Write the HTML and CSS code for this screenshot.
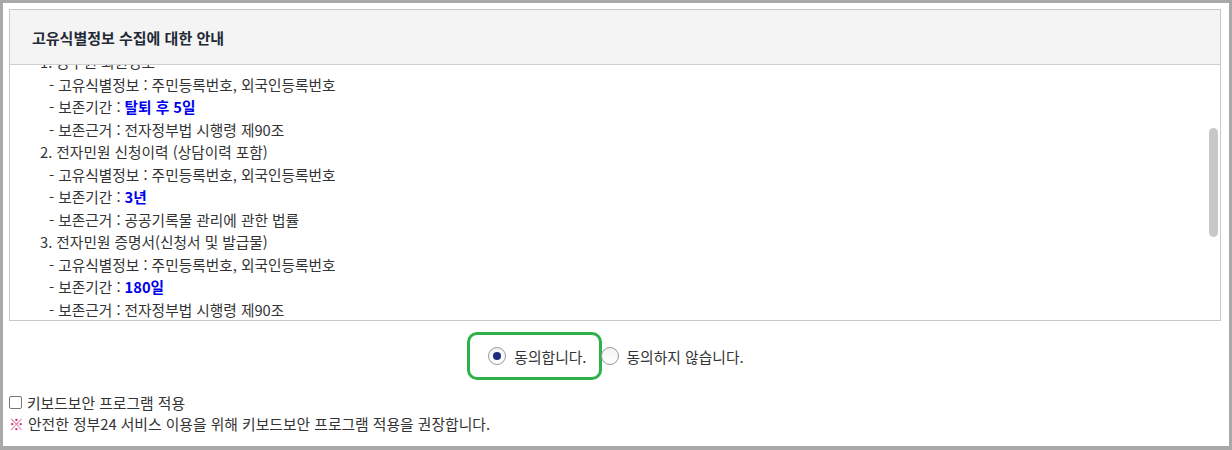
FILE: index.html
```html
<!DOCTYPE html>
<html lang="ko">
<head>
<meta charset="utf-8">
<title>고유식별정보 수집에 대한 안내</title>
<link rel="stylesheet" href="styles.css">
</head>
<body>
<div class="frame">
  <section class="notice">
    <header class="notice-head">고유식별정보 수집에 대한 안내</header>
    <div class="notice-body">
      <div class="notice-scroll">
        <p class="item">1. 공무원 회원정보</p>
        <p class="sub">- 고유식별정보 : 주민등록번호, 외국인등록번호</p>
        <p class="sub">- 보존기간 : <strong class="hl">탈퇴 후 5일</strong></p>
        <p class="sub">- 보존근거 : 전자정부법 시행령 제90조</p>
        <p class="item">2. 전자민원 신청이력 (상담이력 포함)</p>
        <p class="sub">- 고유식별정보 : 주민등록번호, 외국인등록번호</p>
        <p class="sub">- 보존기간 : <strong class="hl">3년</strong></p>
        <p class="sub">- 보존근거 : 공공기록물 관리에 관한 법률</p>
        <p class="item">3. 전자민원 증명서(신청서 및 발급물)</p>
        <p class="sub">- 고유식별정보 : 주민등록번호, 외국인등록번호</p>
        <p class="sub">- 보존기간 : <strong class="hl">180일</strong></p>
        <p class="sub">- 보존근거 : 전자정부법 시행령 제90조</p>
      </div>
      <div class="scroll-thumb"></div>
    </div>
  </section>

  <div class="agree">
    <label class="radio-opt focused"><span class="radio checked"></span><span>동의합니다.</span></label>
    <label class="radio-opt"><span class="radio"></span><span>동의하지 않습니다.</span></label>
  </div>

  <div class="keyboard">
    <label class="check-opt"><span class="checkbox"></span><span>키보드보안 프로그램 적용</span></label>
    <p class="tip"><span class="mark">※</span> 안전한 정부24 서비스 이용을 위해 키보드보안 프로그램 적용을 권장합니다.</p>
  </div>
</div>
</body>
</html>
```

FILE: styles.css
```css
html, body {
  margin: 0;
  padding: 0;
  background: #fff;
}
body {
  font-family: "Noto Sans CJK KR", "Noto Sans", sans-serif;
  color: #333;
  font-size: 14px;
}
.frame {
  box-sizing: border-box;
  width: 1232px;
  height: 450px;
  border: 3px solid #a9a9a9;
  border-bottom-width: 4px;
  padding: 6px 8px 0 6px;
  display: flex;
  flex-direction: column;
}
.notice {
  border: 1px solid #c8c8c8;
  display: flex;
  flex-direction: column;
}
.notice-head {
  box-sizing: border-box;
  height: 55px;
  background: #f4f4f4;
  border-bottom: 1px solid #cfcfcf;
  display: flex;
  align-items: center;
  padding: 1px 0 0 22px;
  font-size: 15px;
  font-weight: 700;
  color: #1f2a36;
}
.notice-body {
  position: relative;
  height: 255px;
  overflow: hidden;
}
.notice-scroll {
  margin-top: -14px;
  padding-left: 30px;
}
.item, .sub {
  margin: 0;
  line-height: 22.5px;
  font-size: 14.7px;
}
.sub {
  padding-left: 9px;
}
.hl {
  color: #0000ee;
  font-weight: 700;
}
.scroll-thumb {
  position: absolute;
  right: 2px;
  top: 63px;
  width: 9px;
  height: 109px;
  border-radius: 5px;
  background: #c8c8c8;
}
.agree {
  display: flex;
  justify-content: center;
  align-items: center;
  gap: 14px;
  margin-top: 26px;
  height: 18px;
  padding-left: 2px;
}
.radio-opt {
  display: flex;
  align-items: center;
  gap: 8px;
  position: relative;
  font-size: 14.8px;
  color: #333;
}
.radio-opt.focused::after {
  content: "";
  position: absolute;
  left: -21px;
  right: -15px;
  top: -14px;
  bottom: -13px;
  border: 3px solid #2fb14a;
  border-radius: 10px;
}
.radio {
  box-sizing: border-box;
  width: 18px;
  height: 18px;
  border-radius: 50%;
  border: 1px solid #9a9a9a;
  background: linear-gradient(#f2f2f2, #fff);
  display: flex;
  align-items: center;
  justify-content: center;
}
.radio.checked::before {
  content: "";
  width: 8px;
  height: 8px;
  border-radius: 50%;
  background: #1e2a80;
}
.keyboard {
  margin-top: 27px;
  font-size: 14.8px;
}
.check-opt {
  display: flex;
  align-items: center;
  gap: 5px;
  line-height: 21px;
}
.checkbox {
  box-sizing: border-box;
  width: 13px;
  height: 13px;
  border: 1px solid #767676;
  border-radius: 2px;
  background: #fff;
}
.tip {
  margin: 0;
  line-height: 21px;
}
.mark {
  color: #d6337a;
}
```
